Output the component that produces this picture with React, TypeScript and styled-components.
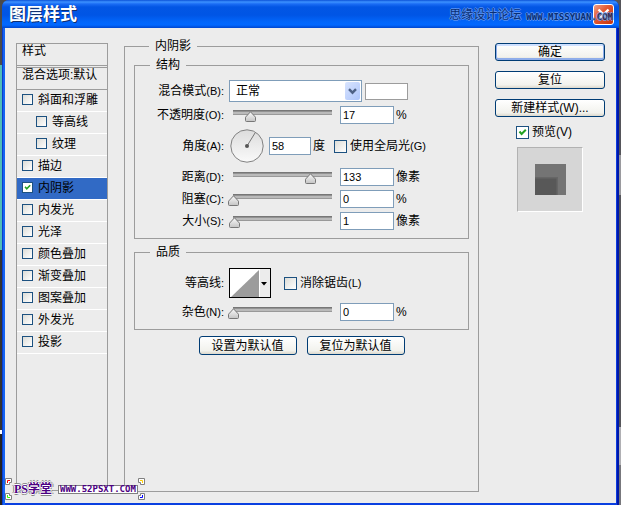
import React from "react";
import styled, { createGlobalStyle, css } from "styled-components";

const sans = `"Liberation Sans", "Noto Sans CJK SC", sans-serif`;
const line = "#9c9c9c";
const face = "#ececec";

const thumb = `url("data:image/svg+xml,%3Csvg xmlns='http://www.w3.org/2000/svg' width='11' height='11'%3E%3Cdefs%3E%3ClinearGradient id='g' x2='0' y2='1'%3E%3Cstop stop-color='%23fafafa'/%3E%3Cstop offset='1' stop-color='%23c4c4c4'/%3E%3C/linearGradient%3E%3C/defs%3E%3Cpath d='M5.5 .8L10.5 6.2V9.5Q10.5 10.5 9.5 10.5H1.5Q.5 10.5 .5 9.5V6.2Z' fill='url(%23g)' stroke='%23777'/%3E%3C/svg%3E")`;
const tick = `url("data:image/svg+xml,%3Csvg xmlns='http://www.w3.org/2000/svg' viewBox='0 0 11 11'%3E%3Cpath d='M2.5 4.5L4.6 7L8.8 2.8' fill='none' stroke='%2321a121' stroke-width='2'/%3E%3C/svg%3E")`;

const Global = createGlobalStyle`
  * { box-sizing: border-box; }
  body {
    margin: 0;
    font: 12px/14px ${sans};
    color: #000;
    background:
      linear-gradient(#4a4a4a 0 65px, #4fbcb8 65px 250px, #333 250px 430px, #fff 430px 434px, #222 434px) left / 50% 100% no-repeat,
      linear-gradient(#55555a 0 155px, #9a9a9e 155px 195px, #55555a 195px 427px, #b0b0b4 427px 465px, #77777c 465px) right / 50% 100% no-repeat;
  }
  button, input, select { font: inherit; color: inherit; margin: 0; }
`;

const Window = styled.main`
  position: relative;
  display: flex;
  flex-direction: column;
  min-height: 100vh;
  margin: 0 2px;
  background: linear-gradient(90deg, #0a3ccc 0 1px, #1463f2 1px 3px, #0a3fe0 3px calc(100% - 3px), #0b3be0 calc(100% - 3px) calc(100% - 2px), #0018a8 calc(100% - 2px));
  border-radius: 7px 7px 0 0;
  overflow: hidden;
`;

const TitleBar = styled.header`
  display: flex;
  align-items: center;
  justify-content: space-between;
  height: 28px;
  padding: 1px 5px 0 7px;
  background: linear-gradient(#0b52d8 0, #3c92ff 2px, #1a6cf4 4px, #0256e4 7px, #0055e5 15px, #0266fb 22px, #0168ff 25px, #0046cf 28px);
`;

const Title = styled.h1`
  margin: 0;
  font-size: 17px;
  line-height: 24px;
  font-weight: 700;
  color: #fff;
  text-shadow: 1px 1px 0 #10306f;
`;

const CloseButton = styled.button`
  display: flex;
  width: 21px;
  height: 21px;
  padding: 1px;
  border: 1px solid #fff;
  border-radius: 3px;
  background: linear-gradient(135deg, #f0a088, #e25a34 40%, #c8330a);
`;

const Cross = styled.svg`
  flex: none;
  width: 17px;
  height: 17px;
`;

const Body = styled.div`
  flex: 1;
  display: flex;
  gap: 16px;
  margin: 0 3px 2px;
  padding: 12px 11px 11px;
  background: ${face};
`;

const StyleList = styled.nav`
  width: 92px;
  margin: 3px 0 1px;
  border: 1px solid ${line};
`;

const ListHeading = styled.h2`
  margin: 0;
  height: 22px;
  padding: 0 5px;
  font-size: 12px;
  line-height: 14px;
  font-weight: 400;
  border-bottom: 1px solid ${line};
`;

const BlendOptions = styled.div`
  height: 23px;
  margin-top: 1px;
  padding-left: 5px;
  white-space: nowrap;
  border: solid ${line};
  border-width: 1px 0;
`;

const StyleItem = styled.label<{ $nested?: boolean; $selected?: boolean }>`
  display: flex;
  align-items: center;
  gap: 5px;
  height: 22px;
  padding-bottom: 2px;
  padding-left: ${(p) => (p.$nested ? 19 : 5)}px;
  border-bottom: 1px solid #fff;
  background: ${(p) => (p.$selected ? "#316ac5" : "none")};
`;

const CheckBox = styled.input.attrs({ type: "checkbox" })<{ $small?: boolean }>`
  appearance: none;
  flex: none;
  width: ${(p) => (p.$small ? 11 : 13)}px;
  height: ${(p) => (p.$small ? 11 : 13)}px;
  border: 1px solid #1c5180;
  background: linear-gradient(135deg, #dcdcd7, #fff);
  &:checked {
    background: ${tick} center / 100% no-repeat, #fff;
  }
`;

const Group = styled.fieldset<{ $outer?: boolean }>`
  min-width: 0;
  margin: 0;
  border: 1px solid ${line};
  ${(p) =>
    p.$outer
      ? css`
          flex: 1;
          padding: 6px 9px;
        `
      : css`
          padding: 8px 0;
          & + & {
            margin-top: 7px;
          }
        `}
`;

const Legend = styled.legend`
  height: 13px;
  margin-left: 15px;
  padding: 0 6px;
  line-height: 12px;
`;

const Rows = styled.div`
  display: flex;
  flex-direction: column;
  gap: 4px;
`;

const Row = styled.div<{ $tall?: boolean }>`
  display: flex;
  align-items: center;
  min-height: 18px;
  padding: ${(p) => (p.$tall ? 1 : 0)}px 0;
  white-space: nowrap;
`;

const FieldName = styled.label`
  width: 89px;
  margin-right: 4px;
  text-align: right;
`;

const Key = styled.span`
  font-size: 11px;
`;

const SelectBox = styled.div`
  position: relative;
  width: 133px;
  height: 22px;
  margin: 0 3px 0 1px;
`;

const Select = styled.select`
  appearance: none;
  width: 100%;
  height: 100%;
  padding: 0 20px 0 6px;
  border: 1px solid #7f9db9;
  border-radius: 0;
  background: #fff;
`;

const Arrow = styled.span`
  position: absolute;
  top: 2px;
  right: 2px;
  bottom: 2px;
  display: flex;
  align-items: center;
  justify-content: center;
  width: 15px;
  border-radius: 2px;
  background: linear-gradient(135deg, #d8e4fe, #adc5fb);
  pointer-events: none;
`;

const Swatch = styled.button`
  width: 43px;
  height: 17px;
  padding: 0;
  border: 1px solid ${line};
  background: #fff;
`;

const Slider = styled.input.attrs({ type: "range" })`
  appearance: none;
  width: 109px;
  height: 18px;
  margin-right: 3px;
  background: none;
  &::-webkit-slider-runnable-track {
    height: 18px;
    background: linear-gradient(#777 0 1px, #929292 1px 2px, #bababa 2px 4px, #999 4px 5px) 5px 4px / calc(100% - 10px) 5px no-repeat;
  }
  &::-webkit-slider-thumb {
    appearance: none;
    width: 11px;
    height: 11px;
    margin-top: 5px;
    background: ${thumb};
  }
`;

const NumberBox = styled.input.attrs({ type: "text" })<{ $narrow?: boolean }>`
  width: ${(p) => (p.$narrow ? 42 : 54)}px;
  height: 18px;
  margin-right: 2px;
  padding: 0 2px;
  font-size: 11px;
  border: 1px solid #7f9db9;
  background: #fff;
`;

const Dial = styled.svg`
  flex: none;
  width: 34px;
  height: 34px;
  margin: 0 5px 0 2px;
`;

const CheckLabel = styled.label<{ $gap: number }>`
  display: flex;
  align-items: center;
  gap: 3px;
  margin-left: ${(p) => p.$gap}px;
  white-space: nowrap;
`;

const Contour = styled.button`
  display: flex;
  width: 42px;
  height: 30px;
  margin-left: 1px;
  padding: 0;
  border: 1px solid #000;
  background: #fff;
`;

const Actions = styled.div`
  display: flex;
  justify-content: center;
  gap: 10px;
  margin-top: 6px;
`;

const Button = styled.button<{ $primary?: boolean; $wide?: boolean }>`
  width: ${(p) => (p.$wide ? "100%" : "98px")};
  height: ${(p) => (p.$wide ? 18 : 19)}px;
  padding: 0;
  line-height: 14px;
  border: 1px solid #003c74;
  border-radius: 3px;
  background: linear-gradient(#fff, #f2f2ed 80%, #dcd8cc);
  ${(p) => p.$primary && "box-shadow: inset 0 -1px 0 1px #8fadea, inset 0 1px 0 1px #cee0ff;"}
`;

const Side = styled.aside`
  display: flex;
  flex-direction: column;
  gap: 10px;
  width: 110px;
  margin-top: 3px;
`;

const PreviewArea = styled.div`
  display: flex;
  flex-direction: column;
  gap: 8px;
  margin-top: -2px;
`;

const Preview = styled.div`
  align-self: center;
  display: flex;
  align-items: center;
  justify-content: center;
  width: 66px;
  height: 65px;
  border: 1px solid #b2b2b2;
  border-right-color: #fff;
  border-bottom-color: #fff;
  background: #d6d6d6;
`;

const SiteMark = styled.div`
  position: absolute;
  top: 8px;
  right: 6px;
  display: flex;
  align-items: flex-end;
  gap: 5px;
  color: #0a2558;
  text-shadow: 1px 0 0 #6f9ff0, -1px 0 0 #6f9ff0, 0 1px 0 #6f9ff0, 0 -1px 0 #6f9ff0;
  opacity: 0.8;
  pointer-events: none;
`;

const Pixel = styled.span`
  font: 700 9px/10px "DejaVu Sans Mono", monospace;
`;

const AuthorMark = styled.div`
  position: absolute;
  left: 3px;
  bottom: 5px;
  display: flex;
  align-items: center;
  gap: 6px;
  width: 140px;
  height: 22px;
  padding-left: 9px;
  color: #4b0082;
`;

const AuthorName = styled.span`
  font: 700 12px/14px "Liberation Serif", "Noto Sans CJK SC", serif;
  text-shadow: 1px 0 #fff, -1px 0 #fff, 0 1px #fff, 0 -1px #fff, 2px 0 #808080, -2px 0 #808080, 0 2px #808080, 0 -2px #808080;
`;

const AuthorSite = styled(Pixel)`
  line-height: 7px;
  padding: 0 1px;
  border: 1px solid #808080;
  background: #fff;
`;

const Corners = styled.svg`
  position: absolute;
  inset: 0;
  width: 140px;
  height: 22px;
`;

const items = [
  { name: "斜面和浮雕" },
  { name: "等高线", nested: true },
  { name: "纹理", nested: true },
  { name: "描边" },
  { name: "内阴影", selected: true },
  { name: "内发光" },
  { name: "光泽" },
  { name: "颜色叠加" },
  { name: "渐变叠加" },
  { name: "图案叠加" },
  { name: "外发光" },
  { name: "投影" },
];

type SliderRowProps = { id: string; name: string; hotkey: string; value: number; max?: number; unit: string };

function SliderRow({ id, name, hotkey, value, max = 100, unit }: SliderRowProps) {
  const [current, setCurrent] = React.useState(String(value));
  return (
    <Row>
      <FieldName htmlFor={id}>
        {name}
        <Key>({hotkey}):</Key>
      </FieldName>
      <Slider aria-label={name} max={max} value={Number(current) || 0} onChange={(e) => setCurrent(e.target.value)} />
      <NumberBox id={id} value={current} onChange={(e) => setCurrent(e.target.value)} />
      <span>{unit}</span>
    </Row>
  );
}

export default function App() {
  return (
    <>
      <Global />
      <Window>
        <TitleBar>
          <Title>图层样式</Title>
          <CloseButton aria-label="关闭">
            <Cross viewBox="0 0 17 17">
              <path d="M3.5 3.5L13.5 13.5M13.5 3.5L3.5 13.5" stroke="#fff" strokeWidth="2.4" />
            </Cross>
          </CloseButton>
        </TitleBar>
        <Body>
          <StyleList>
            <ListHeading>样式</ListHeading>
            <BlendOptions>混合选项:默认</BlendOptions>
            {items.map((item) => (
              <StyleItem key={item.name} $nested={item.nested} $selected={item.selected}>
                <CheckBox $small defaultChecked={item.selected} />
                {item.name}
              </StyleItem>
            ))}
          </StyleList>

          <Group $outer>
            <Legend>内阴影</Legend>
            <Group>
              <Legend>结构</Legend>
              <Rows>
                <Row>
                  <FieldName htmlFor="mode">
                    混合模式<Key>(B):</Key>
                  </FieldName>
                  <SelectBox>
                    <Select id="mode">
                      <option>正常</option>
                    </Select>
                    <Arrow>
                      <svg width="9" height="7" viewBox="0 0 9 7">
                        <path d="M1 1.2L4.5 4.7L8 1.2" fill="none" stroke="#4d6185" strokeWidth="2.4" />
                      </svg>
                    </Arrow>
                  </SelectBox>
                  <Swatch aria-label="颜色" />
                </Row>
                <SliderRow id="opacity" name="不透明度" hotkey="O" value={17} unit="%" />
                <Row $tall>
                  <FieldName htmlFor="angle">
                    角度<Key>(A):</Key>
                  </FieldName>
                  <Dial viewBox="0 0 34 34">
                    <defs>
                      <linearGradient id="dial" x2="0" y2="1">
                        <stop stopColor="#dcdcdc" />
                        <stop offset="1" stopColor="#fafafa" />
                      </linearGradient>
                    </defs>
                    <circle cx="17" cy="17" r="16.2" fill="url(#dial)" stroke="#808080" />
                    <path d="M17 17L25 4" stroke="#777" />
                    <circle cx="17" cy="17" r="2" fill="#555" />
                  </Dial>
                  <NumberBox id="angle" $narrow defaultValue="58" />
                  <span>度</span>
                  <CheckLabel $gap={9}>
                    <CheckBox />
                    <span>
                      使用全局光<Key>(G)</Key>
                    </span>
                  </CheckLabel>
                </Row>
                <SliderRow id="distance" name="距离" hotkey="D" value={133} max={169} unit="像素" />
                <SliderRow id="choke" name="阻塞" hotkey="C" value={0} unit="%" />
                <SliderRow id="size" name="大小" hotkey="S" value={1} unit="像素" />
              </Rows>
            </Group>
            <Group>
              <Legend>品质</Legend>
              <Rows>
                <Row $tall>
                  <FieldName htmlFor="contour">
                    等高线<Key>:</Key>
                  </FieldName>
                  <Contour id="contour">
                    <svg width="40" height="28" viewBox="0 0 40 28">
                      <path d="M1 28L29 1V28Z" fill="#9c9c9c" />
                      <path d="M29 0H40V28H29Z" fill="#ececec" />
                      <path d="M29.5 0V28" stroke="#fff" />
                      <path d="M31 13H37L34 16.5Z" />
                    </svg>
                  </Contour>
                  <CheckLabel $gap={13}>
                    <CheckBox />
                    <span>
                      消除锯齿<Key>(L)</Key>
                    </span>
                  </CheckLabel>
                </Row>
                <SliderRow id="noise" name="杂色" hotkey="N" value={0} unit="%" />
              </Rows>
            </Group>
            <Actions>
              <Button>设置为默认值</Button>
              <Button>复位为默认值</Button>
            </Actions>
          </Group>

          <Side>
            <Button $wide $primary>确定</Button>
            <Button $wide>复位</Button>
            <Button $wide>新建样式(W)...</Button>
            <PreviewArea>
              <CheckLabel $gap={21}>
                <CheckBox defaultChecked />
                <span>预览(V)</span>
              </CheckLabel>
              <Preview>
                <svg width="31" height="31" viewBox="0 0 31 31">
                  <path d="M0 0H31V31H0Z" fill="#747474" />
                  <path d="M0 13H23V31H0Z" fill="#666" />
                  <path d="M0 14.5H21.5V31H0Z" fill="#585858" />
                </svg>
              </Preview>
            </PreviewArea>
          </Side>
        </Body>
        <SiteMark>
          <span>思缘设计论坛</span>
          <Pixel>WWW.MISSYUAN.COM</Pixel>
        </SiteMark>
        <AuthorMark>
          <AuthorName>PS学堂</AuthorName>
          <AuthorSite>WWW.52PSXT.COM</AuthorSite>
          <Corners viewBox="0 0 140 22">
            <g fill="#fff" stroke="#808080">
              <path d="M.5 .5H6.5V4.5H4.5V6.5H.5Z" />
              <path d="M133.5 .5H139.5V6.5H135.5V4.5H133.5Z" />
              <path d="M.5 15.5H4.5V17.5H6.5V21.5H.5Z" />
              <path d="M139.5 15.5V21.5H133.5V17.5H135.5V15.5Z" />
            </g>
            <path d="M2.5 5V2.5H5" fill="none" stroke="#f00" />
            <path d="M135 2.5H137.5V5" fill="none" stroke="#fc0" />
            <path d="M2.5 17V19.5H5" fill="none" stroke="#3f0" />
            <path d="M135 19.5H137.5V17" fill="none" stroke="#00f" />
          </Corners>
        </AuthorMark>
      </Window>
    </>
  );
}
